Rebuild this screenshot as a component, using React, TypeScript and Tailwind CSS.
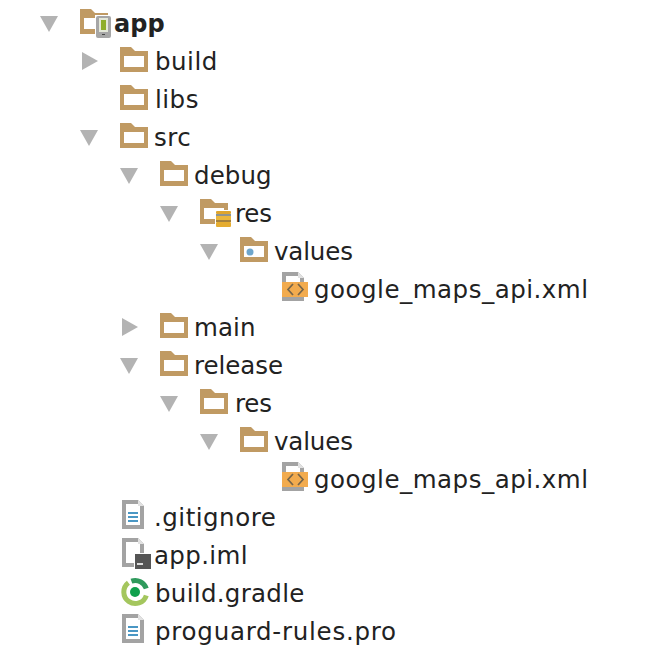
import React from 'react';

// ─── Icons ────────────────────────────────────────────────────────────────────

const Folder = ({ children }: { children?: React.ReactNode }) => (
    <svg width="36" height="30" viewBox="0 0 36 30" className="block overflow-visible">
        <path d="M0 1h11l4 4h13v21H0z" fill="#c09a63" />
        <rect x="4" y="10" width="20" height="11" fill="#fff" />
        {children}
    </svg>
);

const AppFolder = () => (
    <Folder>
        <rect x="15" y="7" width="17" height="24" fill="#fff" />
        <rect x="16" y="8" width="15" height="22" rx="2" fill="#a6a6a6" />
        <rect x="19" y="10" width="9" height="14" fill="#e4e8d8" />
        <rect x="21" y="12" width="5" height="10" fill="#8fae2b" />
        <rect x="22" y="26" width="3" height="1" fill="#444" />
    </Folder>
);

const ResFolder = () => (
    <Folder>
        <rect x="15" y="12" width="17" height="18" fill="#fff" />
        <rect x="16" y="13" width="15" height="3" rx="1" fill="#dfa52c" />
        <rect x="16" y="16" width="15" height="2" fill="#8f9490" />
        <rect x="16" y="18" width="15" height="4" fill="#eab63c" />
        <rect x="16" y="22" width="15" height="2" fill="#a5813c" />
        <rect x="16" y="24" width="15" height="5" rx="1" fill="#e5ac30" />
    </Folder>
);

const ValuesFolder = () => (
    <Folder>
        <circle cx="10" cy="16" r="3.500" fill="#6ea6cc" />
    </Folder>
);

const Page = ({ children }: { children?: React.ReactNode }) => (
    <svg width="36" height="34" viewBox="0 0 36 34" className="block overflow-visible">
        <path d="M2 0h16l6 6v23H2z" fill="#a3a3a3" />
        <rect x="6" y="4" width="14" height="21" fill="#fff" />
        <path d="M18 0l6 6h-6z" fill="#e2e2e2" />
        {children}
    </svg>
);

const TextFile = () => (
    <Page>
        <rect x="8" y="12" width="10" height="2" fill="#4a97c4" />
        <rect x="8" y="16" width="10" height="2" fill="#4a97c4" />
        <rect x="8" y="20" width="10" height="2" fill="#4a97c4" />
    </Page>
);

const XmlFile = () => (
    <Page>
        <rect x="2" y="10" width="26" height="15" fill="#f2ab4e" />
        <path d="M13 12l-5 5.500 5 5.500M18 12l5 5.500-5 5.500" fill="none" stroke="#75654a" strokeWidth="1.700" />
    </Page>
);

const ImlFile = () => (
    <Page>
        <rect x="14" y="15" width="18" height="17" fill="#fff" />
        <rect x="15" y="16" width="16" height="15" fill="#555" />
        <rect x="17" y="25" width="6" height="2" fill="#ddd" />
    </Page>
);

const GradleIcon = () => (
    <svg width="36" height="32" viewBox="0 0 36 32" className="block">
        <path d="M8.400 5.800A11.500 11.500 0 1 0 26.300 18.400" fill="none" stroke="#a4c65e" strokeWidth="5" />
        <path d="M11.400 4.200A11.500 11.500 0 0 1 26.300 11.600" fill="none" stroke="#2f9a5c" strokeWidth="5" />
        <circle cx="15" cy="15" r="5" fill="#0fa04c" />
    </svg>
);

// ─── Tree data ────────────────────────────────────────────────────────────────

type Arrow = 'open' | 'closed' | 'none';

interface Node {
    indent: string;
    arrow: Arrow;
    icon: React.ReactNode;
    label: string;
    text: string; // per-label tracking, the reference font has other letter widths
}

const nodes: Node[] = [
    { indent: 'pl-[40px]', arrow: 'open', icon: <AppFolder />, label: 'app', text: 'font-bold text-[24px]' },
    { indent: 'pl-[80px]', arrow: 'closed', icon: <Folder />, label: 'build', text: 'tracking-[0.5px] ml-[1px]' },
    { indent: 'pl-[80px]', arrow: 'none', icon: <Folder />, label: 'libs', text: 'tracking-[0.5px] ml-[1px]' },
    { indent: 'pl-[80px]', arrow: 'open', icon: <Folder />, label: 'src', text: 'tracking-[0.5px]' },
    { indent: 'pl-[120px]', arrow: 'open', icon: <Folder />, label: 'debug', text: 'tracking-[0.1px]' },
    { indent: 'pl-[160px]', arrow: 'open', icon: <ResFolder />, label: 'res', text: 'tracking-[-0.2px] ml-[1px]' },
    { indent: 'pl-[200px]', arrow: 'open', icon: <ValuesFolder />, label: 'values', text: 'tracking-[-0.15px]' },
    { indent: 'pl-[240px]', arrow: 'none', icon: <XmlFile />, label: 'google_maps_api.xml', text: 'tracking-[0.5px]' },
    { indent: 'pl-[120px]', arrow: 'closed', icon: <Folder />, label: 'main', text: 'tracking-[0.1px]' },
    { indent: 'pl-[120px]', arrow: 'open', icon: <Folder />, label: 'release', text: 'tracking-[-0.05px]' },
    { indent: 'pl-[160px]', arrow: 'open', icon: <Folder />, label: 'res', text: 'tracking-[-0.2px] ml-[1px]' },
    { indent: 'pl-[200px]', arrow: 'open', icon: <Folder />, label: 'values', text: 'tracking-[-0.15px]' },
    { indent: 'pl-[240px]', arrow: 'none', icon: <XmlFile />, label: 'google_maps_api.xml', text: 'tracking-[0.5px]' },
    { indent: 'pl-[80px]', arrow: 'none', icon: <TextFile />, label: '.gitignore', text: 'tracking-[0.5px]' },
    { indent: 'pl-[80px]', arrow: 'none', icon: <ImlFile />, label: 'app.iml', text: 'tracking-[0.35px]' },
    { indent: 'pl-[80px]', arrow: 'none', icon: <GradleIcon />, label: 'build.gradle', text: 'tracking-[0.3px] ml-[1px]' },
    { indent: 'pl-[80px]', arrow: 'none', icon: <TextFile />, label: 'proguard-rules.pro', text: 'tracking-[0.75px] ml-[1px]' },
];

const Toggle = ({ arrow }: { arrow: Arrow }) => (
    <div className="w-[40px] shrink-0">
        {arrow === 'open' && (
            <svg width="18" height="18" viewBox="0 0 18 18" className="block">
                <path d="M0 2h18L9 18z" fill="#b3b3b3" />
            </svg>
        )}
        {arrow === 'closed' && (
            <svg width="18" height="18" viewBox="0 0 18 18" className="block">
                <path d="M2 0l16 9L2 18z" fill="#b3b3b3" />
            </svg>
        )}
    </div>
);

export default function App() {
    return (
        <div className="w-[656px] h-[654px] bg-white pt-[4px] font-['DejaVu_Sans',sans-serif] text-[#222] text-[24.5px] overflow-hidden">
            {nodes.map((n, i) => (
                <div key={i} className={`h-[38px] flex items-center ${n.indent}`}>
                    <Toggle arrow={n.arrow} />
                    <div className="w-[34px] shrink-0">{n.icon}</div>
                    <span className={`pt-[2px] ${n.text}`}>{n.label}</span>
                </div>
            ))}
        </div>
    );
}
